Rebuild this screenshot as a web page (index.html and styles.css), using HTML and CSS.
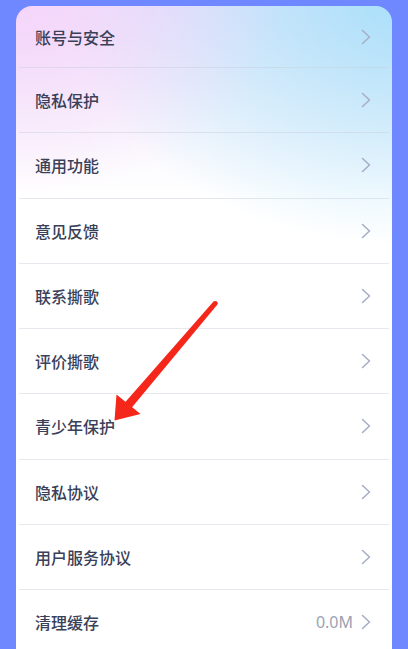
FILE: index.html
```html
<!DOCTYPE html>
<html lang="zh-CN">
<head>
<meta charset="utf-8">
<title>设置</title>
<link rel="stylesheet" href="styles.css">
</head>
<body>
<div class="page">
  <div class="card">
    <div class="row first"><span class="label">账号与安全</span><span class="right"><svg class="chev" viewBox="0 0 10 16"><path d="M1.5 1.5 L8.5 8 L1.5 14.5"/></svg></span></div>
    <div class="row"><span class="label">隐私保护</span><span class="right"><svg class="chev" viewBox="0 0 10 16"><path d="M1.5 1.5 L8.5 8 L1.5 14.5"/></svg></span></div>
    <div class="row"><span class="label">通用功能</span><span class="right"><svg class="chev" viewBox="0 0 10 16"><path d="M1.5 1.5 L8.5 8 L1.5 14.5"/></svg></span></div>
    <div class="row"><span class="label">意见反馈</span><span class="right"><svg class="chev" viewBox="0 0 10 16"><path d="M1.5 1.5 L8.5 8 L1.5 14.5"/></svg></span></div>
    <div class="row"><span class="label">联系撕歌</span><span class="right"><svg class="chev" viewBox="0 0 10 16"><path d="M1.5 1.5 L8.5 8 L1.5 14.5"/></svg></span></div>
    <div class="row"><span class="label">评价撕歌</span><span class="right"><svg class="chev" viewBox="0 0 10 16"><path d="M1.5 1.5 L8.5 8 L1.5 14.5"/></svg></span></div>
    <div class="row"><span class="label">青少年保护</span><span class="right"><svg class="chev" viewBox="0 0 10 16"><path d="M1.5 1.5 L8.5 8 L1.5 14.5"/></svg></span></div>
    <div class="row"><span class="label">隐私协议</span><span class="right"><svg class="chev" viewBox="0 0 10 16"><path d="M1.5 1.5 L8.5 8 L1.5 14.5"/></svg></span></div>
    <div class="row"><span class="label">用户服务协议</span><span class="right"><svg class="chev" viewBox="0 0 10 16"><path d="M1.5 1.5 L8.5 8 L1.5 14.5"/></svg></span></div>
    <div class="row last"><span class="label">清理缓存</span><span class="right"><span class="value">0.0M</span><svg class="chev" viewBox="0 0 10 16"><path d="M1.5 1.5 L8.5 8 L1.5 14.5"/></svg></span></div>
  </div>
  <svg class="arrow" viewBox="0 0 408 649" width="408" height="649">
    <polygon points="217,305 213.5,301.5 124.5,403 131,408.5" fill="#f4271a"/>
    <circle cx="215.3" cy="303.3" r="2.4" fill="#f4271a"/>
    <polygon points="116.5,394.5 140.5,414 114.5,420.5" fill="#f4271a"/>
  </svg>
</div>
</body>
</html>
```

FILE: styles.css
```css
* { box-sizing: border-box; }
html, body {
  margin: 0;
  padding: 0;
  background: #7088ff;
}
body {
  font-family: "Noto Sans CJK SC", "Noto Sans", sans-serif;
}
.page {
  position: relative;
  width: 408px;
  height: 649px;
  overflow: hidden;
  padding: 6px 16px 0 16px;
}
.card {
  width: 376px;
  height: 700px;
  border-radius: 16px 16px 0 0;
  padding: 0 3px;
  background:
    radial-gradient(ellipse 260px 190px at 0px 0px, rgba(246, 212, 250, 0.9), rgba(246, 212, 250, 0) 100%),
    radial-gradient(ellipse 340px 250px at 390px -10px, rgba(168, 224, 250, 1) 0%, rgba(180, 228, 250, 0.6) 50%, rgba(200, 235, 250, 0) 100%),
    linear-gradient(180deg, #ece2fa 0px, #f6f3fc 90px, #ffffff 190px);
}
.row {
  height: 65.25px;
  border-bottom: 1px solid rgba(200, 205, 215, 0.45);
  display: flex;
  align-items: center;
  justify-content: space-between;
  padding: 0 18px 0 16px;
}
.row.first { height: 62px; }
.label {
  font-size: 16px;
  font-weight: 500;
  color: #394058;
  letter-spacing: 0;
}
.right {
  display: flex;
  align-items: center;
  gap: 8px;
}
.value {
  font-family: "Noto Sans", sans-serif;
  font-size: 16px;
  color: #9ca2b4;
}
.chev {
  width: 10px;
  height: 16px;
  fill: none;
  stroke: #a7afc6;
  stroke-width: 1.6;
  stroke-linecap: round;
  stroke-linejoin: round;
}
.arrow {
  position: absolute;
  left: 0;
  top: 0;
  pointer-events: none;
}
```
